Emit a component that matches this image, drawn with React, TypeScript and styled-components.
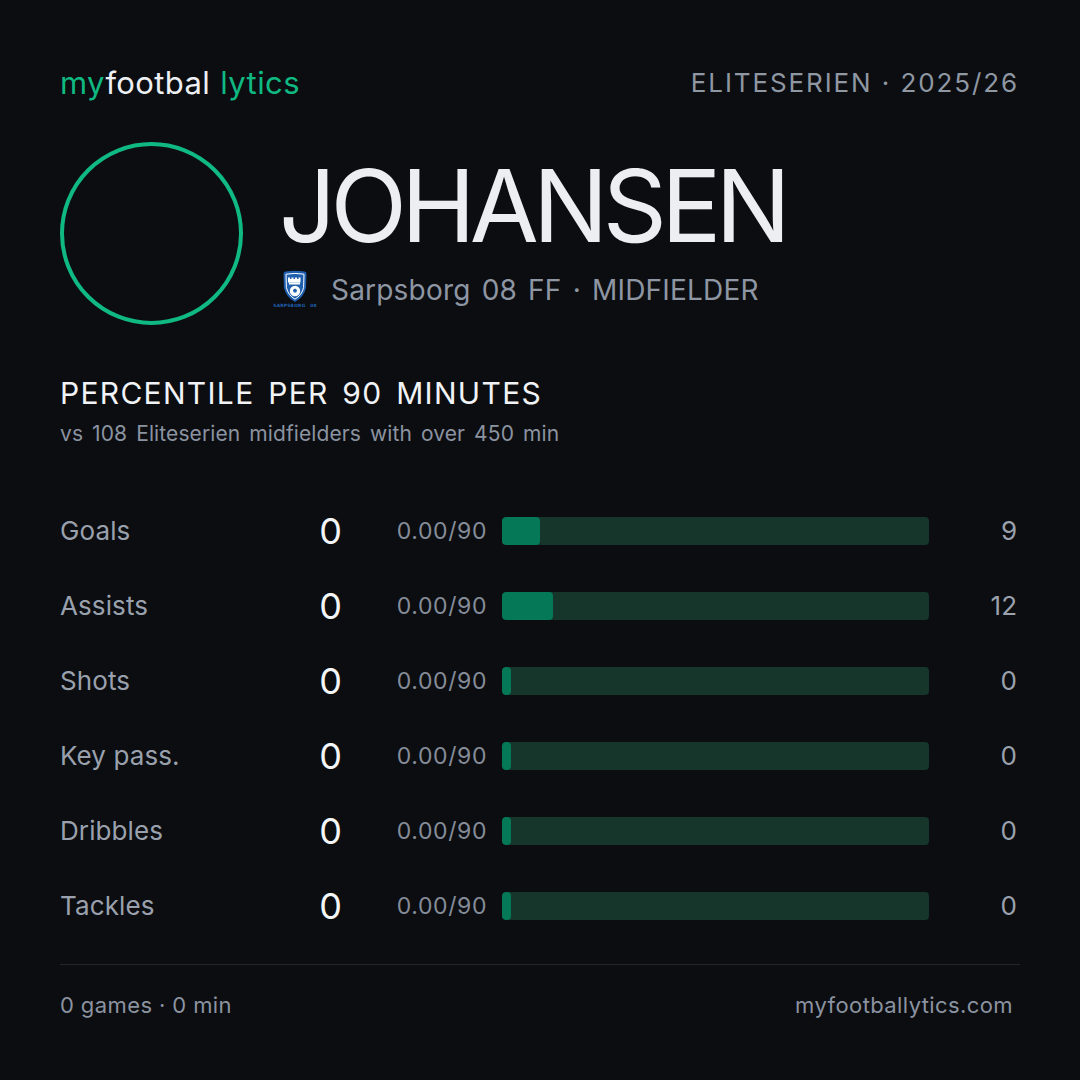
import styled, { createGlobalStyle } from "styled-components";

const GlobalStyle = createGlobalStyle`
  html, body {
    margin: 0;
    padding: 0;
    background: #0b0d11;
  }
  * {
    box-sizing: border-box;
  }
`

const Page = styled.div`
  width: 1080px;
  height: 1080px;
  padding: 0 60px;
  background: #0b0d11;
  font-family: Inter, "Noto Sans", sans-serif;
  display: flex;
  flex-direction: column;
  overflow: hidden;
`
const TopBar = styled.header`
  height: 40px;
  margin-top: 62px;
  display: flex;
  align-items: center;
  justify-content: space-between;
`
const Logo = styled.div`
  font-size: 31px;
  letter-spacing: 0.4px;
  display: flex;
  gap: 10px;
`
const LogoPart = styled.span<{ $green?: boolean }>`
  color: ${props => props.$green ? "#10b981" : "#eef0f3"};
`
const Season = styled.div`
  font-size: 26px;
  letter-spacing: 1.9px;
  color: #8f97a3;
  margin-right: 1px;
`
const Profile = styled.section`
  margin-top: 40px;
  display: flex;
  align-items: center;
  gap: 36px;
`
const Avatar = styled.div`
  width: 183px;
  height: 183px;
  border-radius: 50%;
  border: 4px solid #10b981;
  flex-shrink: 0;
`
const Info = styled.div`
  display: flex;
  flex-direction: column;
  gap: 14px;
  margin-top: -2px;
`
const Name = styled.h1`
  margin: 0;
  font-size: 100px;
  line-height: 100px;
  font-weight: 400;
  color: #eceef2;
  letter-spacing: -5.7px;
`
const Club = styled.div`
  display: flex;
  align-items: center;
  gap: 14px;
  margin-left: -6px;
  font-size: 28px;
  color: #8e96a3;
  word-spacing: 3px;
  letter-spacing: 0.2px;
`
const SectionTitle = styled.h2`
  margin: 50px 0 0;
  font-size: 30px;
  line-height: 36px;
  font-weight: 400;
  letter-spacing: 1.3px;
  word-spacing: 4px;
  color: #f1f3f6;
`
const Subtitle = styled.p`
  margin: 10px 0 0;
  font-size: 21px;
  line-height: 26px;
  color: #8b93a0;
  word-spacing: 3px;
  letter-spacing: 0.1px;
`
const Stats = styled.div`
  margin-top: 46px;
  display: flex;
  flex-direction: column;
`
const Row = styled.div`
  height: 75px;
  display: grid;
  grid-template-columns: 200px 83px 144px 1fr 91px;
  align-items: center;
`
const Label = styled.span`
  font-size: 26px;
  color: #9aa1ad;
  letter-spacing: 0.1px;
`
const Value = styled.span`
  font-size: 36px;
  color: #f4f5f7;
  text-align: right;
  margin-right: 1px;
`
const Per90 = styled.span`
  font-size: 23px;
  color: #858c98;
  text-align: right;
  letter-spacing: 0.6px;
`
const Track = styled.div`
  margin-left: 15px;
  height: 28px;
  border-radius: 4px;
  background: #16352b;
  overflow: hidden;
`
const Fill = styled.div`
  height: 100%;
  min-width: 9px;
  border-radius: 4px;
  background: #047857;
`
const Pct = styled.span`
  font-size: 26px;
  color: #9aa1ad;
  text-align: right;
  margin-right: 3px;
`
const Divider = styled.hr`
  margin: 21px 0 0;
  border: none;
  height: 1px;
  background: #22252d;
`
const Footer = styled.footer`
  margin-top: 26px;
  display: flex;
  justify-content: space-between;
  font-size: 22px;
  line-height: 28px;
  letter-spacing: 0.4px;
  color: #8b93a0;
`
const FooterRight = styled.span`
  margin-right: 7px;
`

const Badge = () => (
  <svg width="44" height="40" viewBox="0 0 44 40">
    <path d="M10.5 4 Q10.5 2 12.5 1.6 Q22 -0.2 31.5 1.6 Q33.5 2 33.5 4 L33 18 Q31 27 22 32 Q13 27 11 18 Z" fill="#1f5fae" />
    <path d="M13 4.2 Q22 2.6 31 4.2 L30.6 17.5 Q29 25 22 29.2 Q15 25 13.4 17.5 Z" fill="none" stroke="#ffffff" strokeWidth="1" />
    <path d="M15 7.5 h2 v1.5 h1.5 v-1.5 h2 v1.5 h1.5 v-1.5 h2 v1.5 h1.5 v-1.5 h2 v5 h-12.5 z" fill="#ffffff" />
    <rect x="16" y="12.5" width="11" height="2" fill="#ffffff" />
    <circle cx="22" cy="21" r="5.2" fill="#ffffff" />
    <path d="M22 18.6 l2.1 1.5 -0.8 2.4 h-2.6 l-0.8 -2.4 z" fill="#1f5fae" />
    <text x="22" y="37" textAnchor="middle" fontSize="4.4" fontWeight="700" fill="#1f5fae" fontFamily="'DejaVu Sans', sans-serif">SARPSBORG 08</text>
  </svg>
)

type Stat = {
  label: string
  value: number
  per90: string
  pct: number
}

const stats: Stat[] = [
  { label: "Goals", value: 0, per90: "0.00/90", pct: 9 },
  { label: "Assists", value: 0, per90: "0.00/90", pct: 12 },
  { label: "Shots", value: 0, per90: "0.00/90", pct: 0 },
  { label: "Key pass.", value: 0, per90: "0.00/90", pct: 0 },
  { label: "Dribbles", value: 0, per90: "0.00/90", pct: 0 },
  { label: "Tackles", value: 0, per90: "0.00/90", pct: 0 },
]

const App = () => {
  return (
    <>
      <GlobalStyle />
      <Page>
        <TopBar>
          <Logo>
            <span>
              <LogoPart $green>my</LogoPart>
              <LogoPart>footbal</LogoPart>
            </span>
            <LogoPart $green>lytics</LogoPart>
          </Logo>
          <Season>ELITESERIEN · 2025/26</Season>
        </TopBar>

        <Profile>
          <Avatar />
          <Info>
            <Name>JOHANSEN</Name>
            <Club>
              <Badge />
              <span>Sarpsborg 08 FF · MIDFIELDER</span>
            </Club>
          </Info>
        </Profile>

        <SectionTitle>PERCENTILE PER 90 MINUTES</SectionTitle>
        <Subtitle>vs 108 Eliteserien midfielders with over 450 min</Subtitle>

        <Stats>
          {stats.map(s => (
            <Row key={s.label}>
              <Label>{s.label}</Label>
              <Value>{s.value}</Value>
              <Per90>{s.per90}</Per90>
              <Track>
                <Fill style={{ width: `${s.pct}%` }} />
              </Track>
              <Pct>{s.pct}</Pct>
            </Row>
          ))}
        </Stats>

        <Divider />
        <Footer>
          <span>0 games · 0 min</span>
          <FooterRight>myfootballytics.com</FooterRight>
        </Footer>
      </Page>
    </>
  );
};

export default App;
